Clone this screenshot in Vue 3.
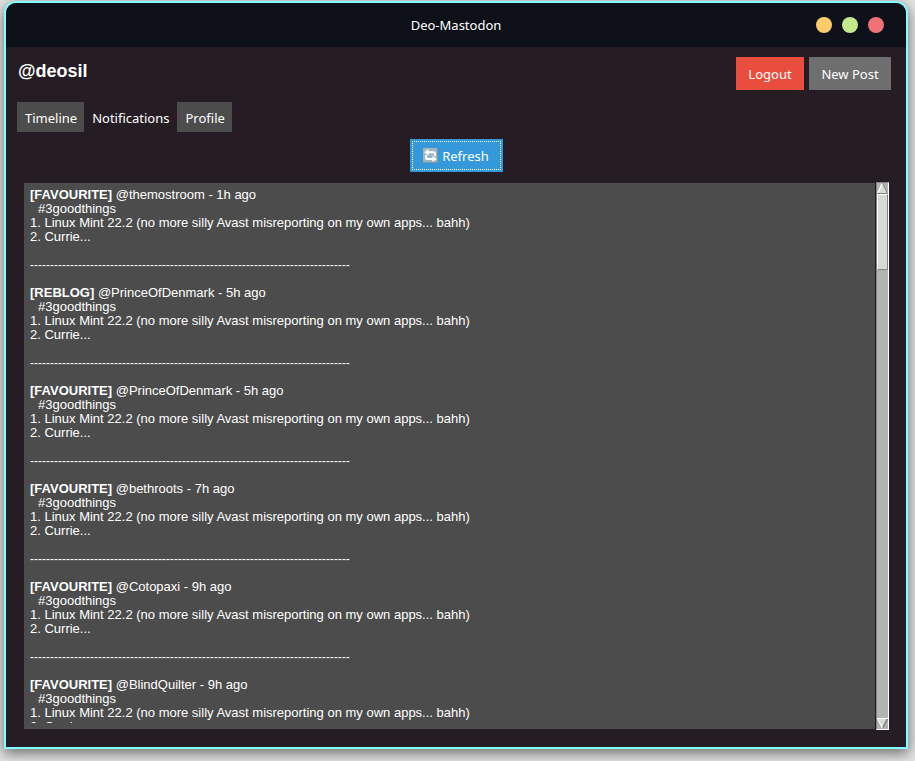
<script setup>
import { ref } from 'vue'

const tabs = ['Timeline', 'Notifications', 'Profile']
const active = ref('Notifications')
const rule = '-'.repeat(80)
const notifications = [
  { kind: 'FAVOURITE', user: 'themostroom', age: '1h' },
  { kind: 'REBLOG', user: 'PrinceOfDenmark', age: '5h' },
  { kind: 'FAVOURITE', user: 'PrinceOfDenmark', age: '5h' },
  { kind: 'FAVOURITE', user: 'bethroots', age: '7h' },
  { kind: 'FAVOURITE', user: 'Cotopaxi', age: '9h' },
  { kind: 'FAVOURITE', user: 'BlindQuilter', age: '9h' },
]
</script>

<template>
  <div class="desktop">
    <div class="window">
      <header class="titlebar">
        <span class="title">Deo-Mastodon</span>
        <div class="controls">
          <button class="dot minimize" aria-label="Minimize"></button>
          <button class="dot maximize" aria-label="Maximize"></button>
          <button class="dot close" aria-label="Close"></button>
        </div>
      </header>
      <main class="content">
        <div class="account">
          <h1 class="handle">@deosil</h1>
          <div class="actions">
            <button class="btn logout">Logout</button>
            <button class="btn post">New Post</button>
          </div>
        </div>
        <nav class="tabs">
          <button
            v-for="tab in tabs"
            :key="tab"
            class="tab"
            :class="{ active: tab === active }"
            @click="active = tab"
          >{{ tab }}</button>
        </nav>
        <button class="btn refresh">
          <svg class="icon" viewBox="0 0 15 15" aria-hidden="true">
            <rect width="15" height="15" rx="1" fill="#7c98a4" />
            <rect width="14" height="14" rx="1" fill="#9fb6c0" />
            <path d="M5.5 1 L1.2 4.2 L5.5 7.4 Z" fill="#fff" />
            <path d="M9.5 7.8 L13.8 11 L9.5 14 Z" fill="#fff" />
            <path d="M5 4.2 H10.5 Q12 4.2 12 5.7 V8" stroke="#fff" stroke-width="2" fill="none" />
            <path d="M10 11 H4.5 Q3 11 3 9.5 V7" stroke="#fff" stroke-width="2" fill="none" />
          </svg>
          <span>Refresh</span>
        </button>
        <div class="panel">
          <div class="feed">
            <div class="lines">
              <article v-for="(n, i) in notifications" :key="i" class="entry">
                <p><b>[{{ n.kind }}]</b> @{{ n.user }} - {{ n.age }} ago</p>
                <p class="tag">#3goodthings</p>
                <p>1. Linux Mint 22.2 (no more silly Avast misreporting on my own apps... bahh)</p>
                <p>2. Currie...</p>
                <p class="rule">{{ rule }}</p>
              </article>
            </div>
          </div>
          <div class="scrollbar">
            <svg class="arrow" viewBox="0 0 11 11" aria-hidden="true">
              <path d="M5.5 0 L11 11 H0 Z" fill="#d9d9d9" />
              <path d="M5.5 0 L0.5 10.5" stroke="#fff" stroke-width="1.5" fill="none" />
              <path d="M5.5 0 L10.5 10.5 H0" stroke="#828282" fill="none" />
            </svg>
            <div class="thumb"></div>
            <svg class="arrow down" viewBox="0 0 11 11" aria-hidden="true">
              <path d="M0 0 H11 L5.5 11 Z" fill="#d9d9d9" />
              <path d="M10.5 0.5 L5.5 10.5" stroke="#828282" stroke-width="1.5" fill="none" />
              <path d="M11 0.5 H0.5 L5.5 10.5" stroke="#fff" fill="none" />
            </svg>
          </div>
        </div>
      </main>
    </div>
  </div>
</template>

<style>
body {
  background: #e6e6e6;
}
</style>

<style scoped>
.desktop {
  box-sizing: border-box;
  height: 100vh;
  padding: 1px 7px 12px 4px;
  overflow: hidden;
}
.window {
  box-sizing: border-box;
  height: 100%;
  display: flex;
  flex-direction: column;
  border: 2px solid #80ffff;
  border-radius: 12px 12px 0 0;
  background: #261d24;
  box-shadow: 0 4px 14px 1px rgba(0, 0, 0, 0.5);
  overflow: hidden;
  color: #fff;
  font-family: "Noto Sans", sans-serif;
  font-size: 13px;
}
button {
  margin: 0;
  border: 0;
  padding: 0;
  color: inherit;
  font: inherit;
  white-space: nowrap;
}
.titlebar {
  height: 44px;
  flex: none;
  display: grid;
  grid-template-columns: 1fr auto 1fr;
  align-items: center;
  padding: 0 22px;
  background: #0e1119;
}
.title {
  grid-column: 2;
}
.controls {
  display: flex;
  justify-content: flex-end;
  gap: 10px;
}
.dot {
  width: 16px;
  height: 16px;
  border-radius: 50%;
}
.minimize { background: #ffcb6b; }
.maximize { background: #c3e88d; }
.close { background: #f07178; }
.content {
  flex: 1;
  min-height: 0;
  display: flex;
  flex-direction: column;
  padding: 10px 11px 17px;
}
.account {
  display: flex;
  justify-content: space-between;
  align-items: flex-start;
  padding: 0 4px 0 1px;
}
.handle {
  margin: 4px 0 0;
  font: bold 18px/20px "Liberation Sans", Arial, sans-serif;
}
.actions {
  display: flex;
  gap: 5px;
}
.btn {
  height: 33px;
  padding: 0 12px;
}
.logout {
  min-width: 68px;
  background: #e94d3d;
}
.post {
  min-width: 82px;
  background: #6e6e6e;
}
.tabs {
  display: flex;
  margin-top: 12px;
}
.tab {
  height: 30px;
  padding: 1px 7px 0 8px;
  background: #4c4c4c;
}
.tab.active {
  padding: 1px 8px 0;
  background: transparent;
}
.refresh {
  flex: none;
  align-self: center;
  display: flex;
  align-items: center;
  justify-content: center;
  gap: 4px;
  min-width: 93px;
  margin-top: 7px;
  background: #3498db;
  outline: 1px dotted #fff;
  outline-offset: -3px;
}
.icon {
  width: 15px;
  height: 15px;
}
.panel {
  flex: 1;
  min-height: 0;
  display: flex;
  gap: 1px;
  margin: 10px 6px 0 7px;
}
.feed {
  flex: 1;
  min-width: 0;
  box-sizing: border-box;
  margin: 1px 0;
  padding: 5px 6px 6px;
  background: #4c4c4c;
  font: 13px/14px "Liberation Sans", Arial, sans-serif;
}
.lines {
  height: 100%;
  overflow: hidden;
}
.entry {
  padding-bottom: 14px;
}
.entry p {
  margin: 0;
  white-space: pre;
}
.entry .tag {
  padding-left: 8px;
}
.entry .rule {
  padding-top: 14px;
  font-size: 12px;
}
.scrollbar {
  box-sizing: border-box;
  width: 13px;
  flex: none;
  display: flex;
  flex-direction: column;
  border: 1px solid;
  border-color: #828282 #fff #fff #828282;
  background: #b3b3b3;
}
.arrow {
  width: 11px;
  height: 11px;
  flex: none;
}
.down {
  margin-top: auto;
}
.thumb {
  box-sizing: border-box;
  height: 14%;
  border: 1px solid;
  border-color: #fff #828282 #828282 #fff;
  background: #d9d9d9;
}
</style>
